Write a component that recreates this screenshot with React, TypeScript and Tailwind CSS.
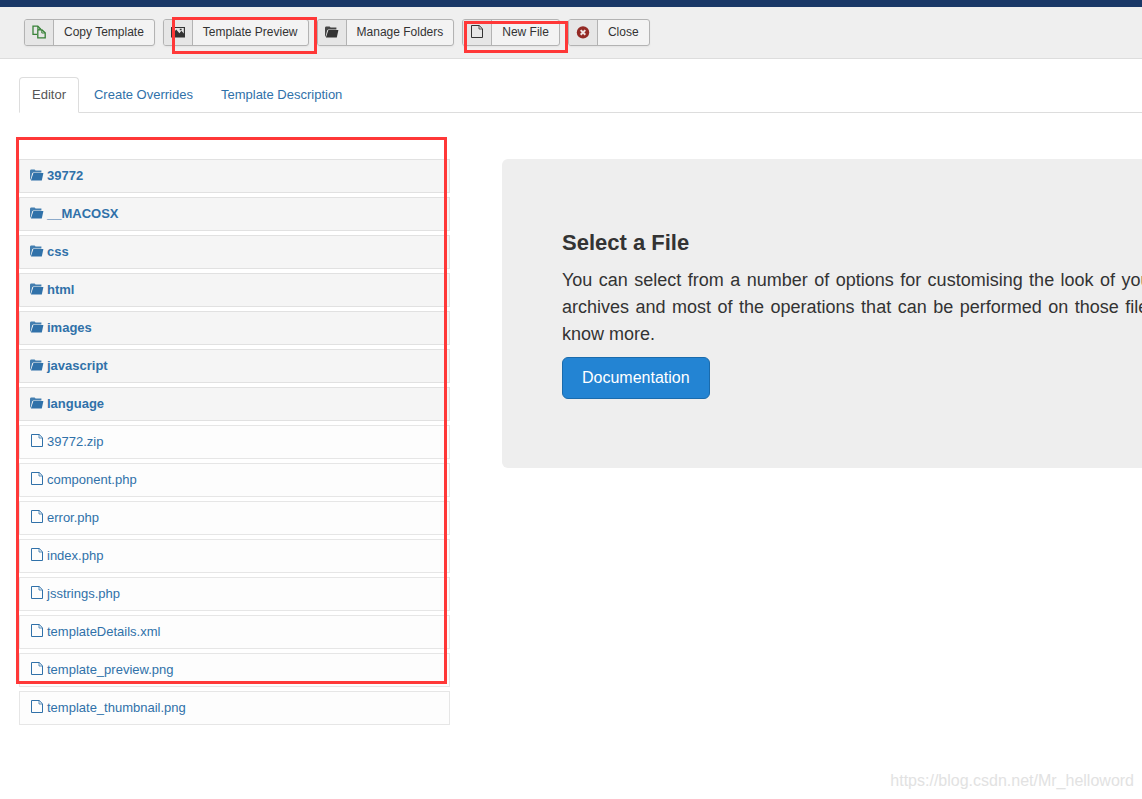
import type { ReactNode } from "react"

type IconProps = { className?: string }

function FolderIcon({ className }: IconProps) {
  return (
    <svg viewBox="0 0 14 16" className={className} fill="currentColor" aria-hidden="true">
      <path d="M0 11.5V2.4L0.8 1.4H4.6L5.6 2.6H11.4V4.4H3.2L2.2 5.2L0.6 11.5Z" opacity="0.9" />
      <path d="M3.4 5H13.4L11.8 12.4H0.9Z" />
    </svg>
  )
}

function FileIcon({ className }: IconProps) {
  return (
    <svg viewBox="0 0 14 16" className={className} fill="none" stroke="currentColor" aria-hidden="true">
      <path d="M1.5 0.5H9.2L12.5 3.8V12.5H1.5Z" />
      <path d="M9 0.5V4H12.5" strokeWidth="0.8" />
    </svg>
  )
}

function CopyIcon({ className }: IconProps) {
  return (
    <svg viewBox="0 0 14 16" className={className} fill="none" stroke="currentColor" aria-hidden="true">
      <path d="M5 9.4H1V1.2H5.8L8.6 4V4.6" strokeWidth="1.3" />
      <path d="M5.8 1.2V4.2H8.6" />
      <path d="M5.8 4.9H10L13.2 7.8V12.9H5.8Z" strokeWidth="1.3" />
      <path d="M9.8 4.9V8H13" />
    </svg>
  )
}

function PictureIcon({ className }: IconProps) {
  return (
    <svg viewBox="0 0 14 16" className={className} aria-hidden="true">
      <path d="M0 2H14V12.5H0Z" fill="currentColor" />
      <path d="M1.2 3H12.8V8.6L10.4 5.8L8.4 8.2L5.2 4.6L1.2 9.5Z" fill="#e6e6e6" />
      <path d="M8.8 3.8H10.6V5.2H8.8Z" fill="currentColor" />
    </svg>
  )
}

function CancelIcon({ className }: IconProps) {
  return (
    <svg viewBox="0 0 14 16" className={className} aria-hidden="true">
      <circle cx="7" cy="7.4" r="6.2" fill="currentColor" />
      <path d="M4.7 5.1L9.3 9.7M9.3 5.1L4.7 9.7" stroke="#f0e4e4" strokeWidth="2" />
    </svg>
  )
}

function ToolbarButton({ icon, children }: { icon: ReactNode; children: ReactNode }) {
  return (
    <button
      type="button"
      className="flex h-[27px] shrink-0 overflow-hidden rounded-[3px] border border-[#b3b3b3] bg-[#f3f3f3] text-xs text-[#333] shadow-xs"
    >
      <span className="flex h-full w-[29px] items-center justify-center border-r border-[#b3b3b3] bg-[#e6e6e6]">
        {icon}
      </span>
      <span className="px-[10px] leading-[25px] whitespace-nowrap">{children}</span>
    </button>
  )
}

const folders = ["39772", "__MACOSX", "css", "html", "images", "javascript", "language"]

const files = [
  "39772.zip",
  "component.php",
  "error.php",
  "index.php",
  "jsstrings.php",
  "templateDetails.xml",
  "template_preview.png",
  "template_thumbnail.png",
]

export default function App() {
  return (
    <div className="relative min-h-screen overflow-hidden bg-white font-['Liberation_Sans',Arial,sans-serif] text-[13px] text-[#333]">
      <div className="h-[7px] bg-[#1a3867]" />

      {/* Toolbar */}
      <div className="flex gap-2 border-b border-[#ddd] bg-[#efefef] pt-3 pb-3 pl-6">
        <ToolbarButton icon={<CopyIcon className="h-4 w-3.5 text-[#378137]" />}>Copy Template</ToolbarButton>
        <ToolbarButton icon={<PictureIcon className="h-4 w-3.5" />}>Template Preview</ToolbarButton>
        <ToolbarButton icon={<FolderIcon className="h-4 w-3.5" />}>Manage Folders</ToolbarButton>
        <ToolbarButton icon={<FileIcon className="h-4 w-3.5" />}>New File</ToolbarButton>
        <ToolbarButton icon={<CancelIcon className="h-4 w-3.5 text-[#942a25]" />}>Close</ToolbarButton>
      </div>

      {/* Tabs */}
      <nav className="mt-[18px] ml-[19px] flex gap-[2px] border-b border-[#ddd] leading-[18px] text-[#3071a9]">
        <a
          href="#editor"
          className="-mb-px rounded-t border border-[#ddd] border-b-white bg-white px-3 py-2 text-[#555]"
        >
          Editor
        </a>
        <a href="#overrides" className="border-x border-t border-transparent px-3 py-2">
          Create Overrides
        </a>
        <a href="#description" className="border-x border-t border-transparent px-3 py-2">
          Template Description
        </a>
      </nav>

      <main className="mt-[46px] flex items-start gap-[52px] pl-[19px]">
        <ul className="flex w-[431px] shrink-0 flex-col gap-1 leading-[18px] text-[#3071a9]">
          {folders.map((name) => (
            <li key={name} className="border border-[#e1e1e1] bg-[#f5f5f5] font-bold">
              <a href="#folder" className="flex items-center gap-[3px] px-[10px] py-[7px]">
                <FolderIcon className="h-4 w-3.5" />
                {name}
              </a>
            </li>
          ))}
          {files.map((name) => (
            <li key={name} className="border border-[#e6e6e6] bg-[#fdfdfd]">
              <a href="#file" className="flex items-center gap-[3px] px-[10px] py-[7px]">
                <FileIcon className="h-4 w-3.5" />
                {name}
              </a>
            </li>
          ))}
        </ul>

        {/* The intro panel keeps its wide measure and runs past the window edge */}
        <section className="min-w-[1394px] flex-1 rounded-md bg-[#eee] px-[60px] pt-[70px] pb-[69px] text-lg leading-[27px]">
          <h2 className="mb-[11px] text-[22px] font-bold">Select a File</h2>
          <p className="mb-[9px] text-justify">
            You can select from a number of options for customising the look of your templates. The template manager
            supports Source files, Image files, Font files, Zip archives and most of the operations that can be
            performed on those files. Just select a file and you are good to go. Check the documentation if you want to
            know more.
          </p>
          <a
            href="#documentation"
            className="block w-fit rounded-md border border-[#1a6bac] bg-[#2384d3] px-[19px] py-[9px] text-base leading-[22px] text-white"
          >
            Documentation
          </a>
        </section>
      </main>

      {/* Highlight boxes drawn over the page */}
      <div className="pointer-events-none absolute top-[17px] left-[172px] h-[37px] w-[145px] border-3 border-[#ff3838]" />
      <div className="pointer-events-none absolute top-[21px] left-[464px] h-8 w-[104px] border-3 border-[#ff3838]" />
      <div className="pointer-events-none absolute top-[137px] left-4 h-[547px] w-[431px] border-3 border-[#ff3838]" />

      <div className="absolute right-2 bottom-2 text-base leading-5 text-[#e2e2e2]">
        https://blog.csdn.net/Mr_helloword
      </div>
    </div>
  )
}
